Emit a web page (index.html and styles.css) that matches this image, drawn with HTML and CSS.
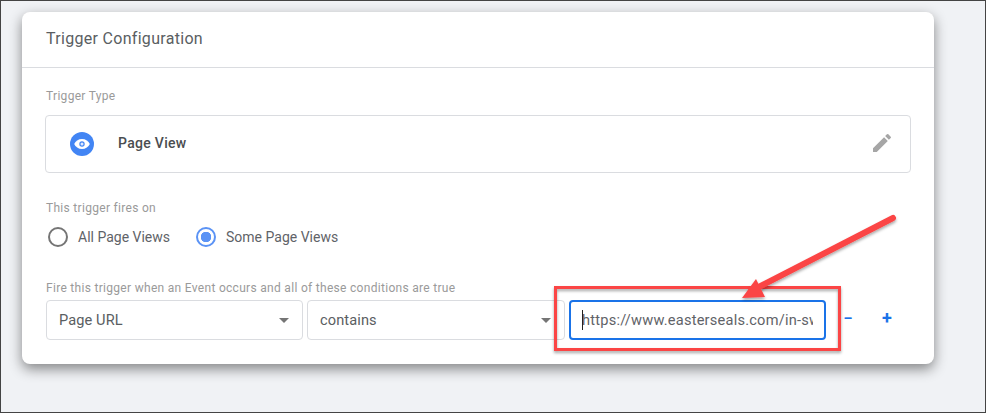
FILE: index.html
```html
<!DOCTYPE html>
<html lang="en">
<head>
<meta charset="utf-8">
<title>Trigger Configuration</title>
<link rel="stylesheet" href="styles.css">
</head>
<body>
<main class="frame">
  <section class="card">
    <header class="card-head">Trigger Configuration</header>
    <div class="card-body">
      <div class="label type-label">Trigger Type</div>
      <div class="type-box">
        <span class="type-icon">
          <svg width="24" height="24" viewBox="0 0 24 24"><circle cx="12" cy="12" r="12" fill="#4285f4"/><path d="M12 7C8.400 7 5.400 9.100 4.200 12c1.200 2.900 4.200 5 7.800 5s6.600-2.100 7.800-5C18.600 9.100 15.600 7 12 7z" fill="#fff"/><circle cx="12" cy="12" r="2.700" fill="#4285f4"/><circle cx="12" cy="12" r="1.500" fill="#dfe9fd"/></svg>
        </span>
        <span class="type-name">Page View</span>
        <svg class="pencil" width="24" height="24" viewBox="0 0 24 24"><path d="M3 17.250V21h3.750L17.810 9.940l-3.750-3.750L3 17.250zM20.710 7.040a1 1 0 0 0 0-1.410l-2.340-2.340a1 1 0 0 0-1.410 0l-1.830 1.830 3.750 3.750 1.830-1.830z" fill="#a6a6a6"/></svg>
      </div>
      <div class="label fires-label">This trigger fires on</div>
      <div class="radios">
        <label class="radio"><span class="dot"></span>All Page Views</label>
        <label class="radio radio-on"><span class="dot"></span>Some Page Views</label>
      </div>
      <div class="label cond-label">Fire this trigger when an Event occurs and all of these conditions are true</div>
      <div class="cond-row">
        <div class="select select-a">Page URL<span class="caret"></span></div>
        <div class="select select-b">contains<span class="caret"></span></div>
        <div class="url-input"><span class="cursor"></span><span class="url-clip">https://www.easterseals.com/in-sw</span></div>
        <span class="op op-minus">–</span>
        <span class="op op-plus">+</span>
      </div>
    </div>
  </section>
  <svg class="annotation" width="986" height="413" viewBox="0 0 986 413">
    <defs>
      <filter id="sh" x="-10%" y="-10%" width="120%" height="130%"><feDropShadow dx="0" dy="2" stdDeviation="1.500" flood-color="#000" flood-opacity=".35"/></filter>
    </defs>
    <rect x="555.500" y="287.500" width="284" height="62" fill="none" stroke="#fb4444" stroke-width="3" filter="url(#sh)"/>
    <g filter="url(#sh)">
      <path d="M893 218 751 291" stroke="#fb4444" stroke-width="6" stroke-linecap="round" fill="none"/>
      <path d="M742 298 756 279 765 297z" fill="#fb4444"/>
    </g>
  </svg>
</main>
</body>
</html>
```
FILE: styles.css
```css
* { box-sizing: border-box; }
html, body { margin: 0; padding: 0; }
body { width: 986px; height: 413px; overflow: hidden; font-family: Roboto, "Liberation Sans", sans-serif; }
.frame {
  position: relative;
  width: 986px;
  height: 413px;
  padding: 11px 0 0 21px;
  background: #f0f2f5;
  border: 1px solid #444;
}
.card {
  width: 912px;
  height: 352px;
  background: #fff;
  border-radius: 8px;
  box-shadow: 0 5px 13px rgba(0, 0, 0, .45);
}
.card-head {
  height: 56px;
  padding: 18px 0 0 24px;
  font-size: 16px;
  line-height: 18px;
  letter-spacing: .3px;
  color: #5a5e62;
  border-bottom: 1px solid #dadce0;
}
.card-body { padding: 0 23px; }
.label { font-size: 12px; line-height: 14px; letter-spacing: .3px; color: #9a9a9a; padding-left: 1px; }
.type-label { padding-top: 21px; height: 47px; }
.type-box {
  display: flex;
  align-items: center;
  height: 58px;
  padding: 0 16px 0 24px;
  border: 1px solid #dadce0;
  border-radius: 4px;
}
.type-icon { display: flex; width: 48px; }
.type-name { flex: 1; padding-bottom: 3px; font-size: 14px; font-weight: 500; letter-spacing: .3px; color: #4a4d50; }
.pencil { margin-bottom: 2px; }
.fires-label { padding-top: 28px; height: 42px; }
.radios { display: flex; height: 66px; padding: 12px 0 0 3px; align-items: flex-start; }
.radio { display: flex; align-items: center; gap: 10px; height: 20px; font-size: 14px; color: #5f6368; }
.radio-on { margin-left: 26px; }
.dot { width: 20px; height: 20px; border: 2px solid #757575; border-radius: 50%; }
.radio-on .dot { border-color: #5b93f5; background: radial-gradient(circle, #5b93f5 0 5px, #fff 5.500px); }
.cond-label { height: 14px; }
.cond-row { display: flex; align-items: center; height: 40px; margin-top: 5px; padding-left: 1px; }
.select {
  position: relative;
  height: 40px;
  padding-left: 12px;
  border: 1px solid #dadce0;
  border-radius: 4px;
  font-size: 14.600px;
  line-height: 38px;
  letter-spacing: .1px;
  color: #5a5e62;
}
.select-a { width: 257px; margin-right: 4px; }
.select-b { width: 258px; margin-right: 4px; }
.caret {
  position: absolute;
  right: 13px;
  top: 17px;
  border: solid transparent;
  border-width: 5px 5px 0;
  border-top-color: #757575;
}
.url-input {
  position: relative;
  display: flex;
  align-items: center;
  width: 257px;
  height: 40px;
  padding: 0 11px;
  border: 2px solid #1a73e8;
  border-radius: 4px;
  font-size: 14.600px;
  letter-spacing: .22px;
  color: #5f6368;
}
.cursor { position: absolute; left: 11px; top: 8px; width: 1px; height: 20px; background: #222; }
.url-clip { display: block; overflow: hidden; white-space: nowrap; width: 231px; }
.op { font-size: 18px; font-weight: 700; color: #1a73e8; text-align: center; line-height: 36px; margin-bottom: 4px; }
.op-minus { width: 14px; margin-left: 15px; font-size: 14px; }
.op-plus { width: 14px; margin-left: 25px; }
.annotation { position: absolute; left: -1px; top: -1px; pointer-events: none; }
```
